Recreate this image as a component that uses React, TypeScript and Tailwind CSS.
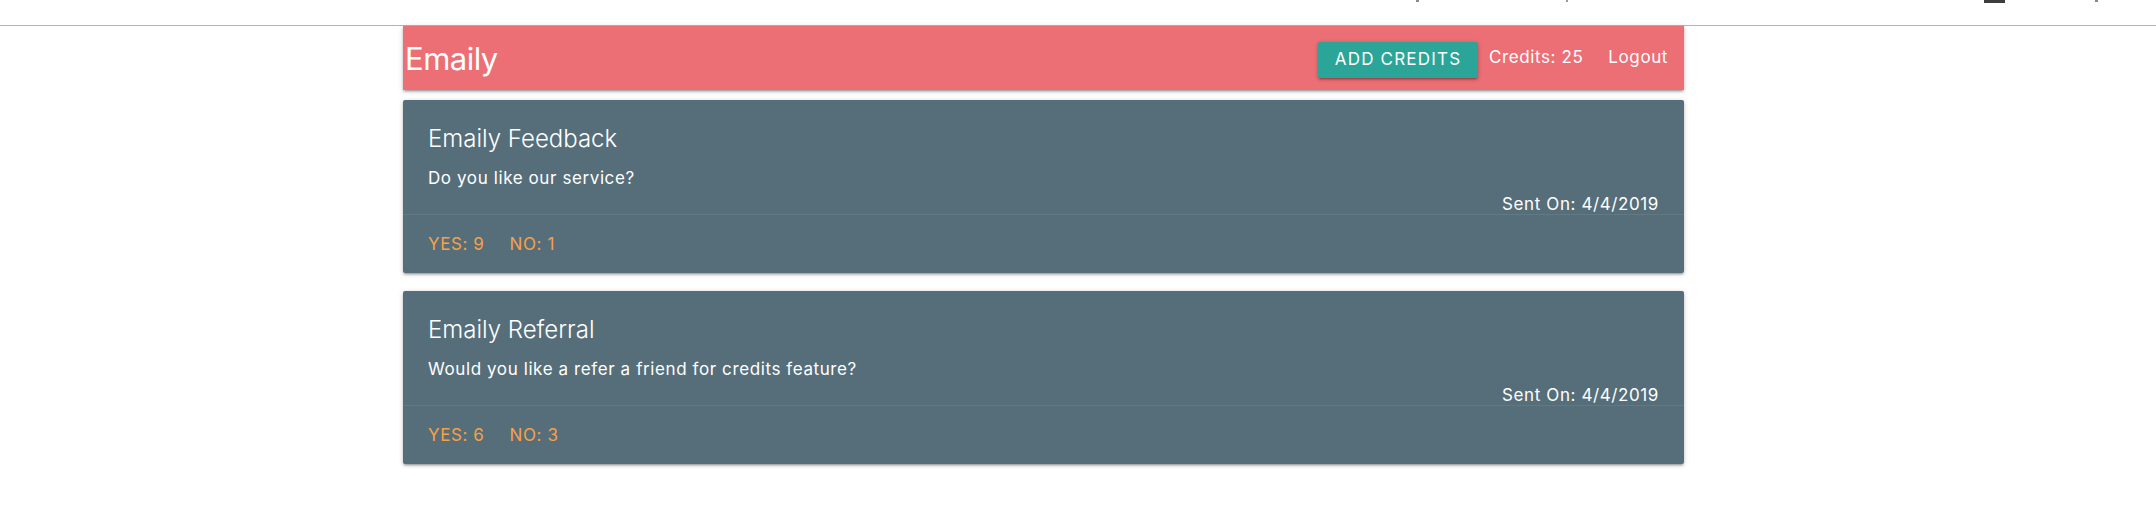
import React from 'react';

type Survey = {
    title: string;
    body: string;
    sent: string;
    yes: number;
    no: number;
};

const surveys: Survey[] = [
    { title: "Emaily Feedback", body: "Do you like our service?", sent: "4/4/2019", yes: 9, no: 1 },
    { title: "Emaily Referral", body: "Would you like a refer a friend for credits feature?", sent: "4/4/2019", yes: 6, no: 3 },
];

const cardShadow = "shadow-[0_2px_2px_0_rgba(0,0,0,0.14),0_3px_1px_-2px_rgba(0,0,0,0.12),0_1px_5px_0_rgba(0,0,0,0.2)]";

function Header() {
    return (
        <nav className={`h-[64px] bg-[#ec6f75] flex items-center justify-between text-white ${cardShadow}`}>
            <a className="text-[31px] leading-none pl-[2px] tracking-[-0.5px]">Emaily</a>
            <div className="flex items-center pr-[16px] text-[17px] tracking-[0.6px]">
                <button className={`mt-[4px] h-[36px] w-[160px] rounded-[2px] bg-[#2ba597] text-white text-[17px] uppercase tracking-[1.2px] ${cardShadow}`}>
                    Add Credits
                </button>
                <span className="ml-[11px]">Credits: 25</span>
                <a className="ml-[25px]">Logout</a>
            </div>
        </nav>
    );
}

function SurveyCard({ survey }: { survey: Survey }) {
    return (
        <div className={`bg-[#566e7a] text-white rounded-[2px] ${cardShadow}`}>
            <div className="px-[25px] pt-[23px] h-[114px]">
                <span className="block text-[24px] leading-[32px] font-light">{survey.title}</span>
                <p className="mt-[12px] text-[17px] leading-[22px] tracking-[0.6px]">{survey.body}</p>
                <p className="mt-[4px] text-[17px] leading-[22px] tracking-[0.6px] text-right">Sent On: {survey.sent}</p>
            </div>
            <div className="border-t border-[rgba(160,160,160,0.2)] h-[59px] pt-[2px] px-[25px] flex items-center gap-[25px] text-[17px] tracking-[0.6px] text-[#f6a145] uppercase">
                <a>Yes: {survey.yes}</a>
                <a>No: {survey.no}</a>
            </div>
        </div>
    );
}

export default function App() {
    return (
        <div className="w-[2156px] h-[506px] bg-white" style={{ fontFamily: "Inter, 'Noto Sans', sans-serif" }}>
            <div className="h-[25px] flex items-start">
                <span className="ml-[1416px] w-[3px] h-[2px] bg-[#8a8a8a]" />
                <span className="ml-[147px] w-[2px] h-[2px] bg-[#9a9a9a]" />
                <span className="ml-[416px] w-[21px] h-[3px] bg-[#3d3d3d]" />
                <span className="ml-[90px] w-[3px] h-[2px] bg-[#8a8a8a]" />
            </div>
            <div className="h-[1px] bg-[#b4b4b4]" />
            <div className="ml-[403px] w-[1281px]">
                <Header />
                <div className="mt-[10px] flex flex-col gap-[18px]">
                    {surveys.map((s) => (
                        <SurveyCard key={s.title} survey={s} />
                    ))}
                </div>
            </div>
        </div>
    );
}
